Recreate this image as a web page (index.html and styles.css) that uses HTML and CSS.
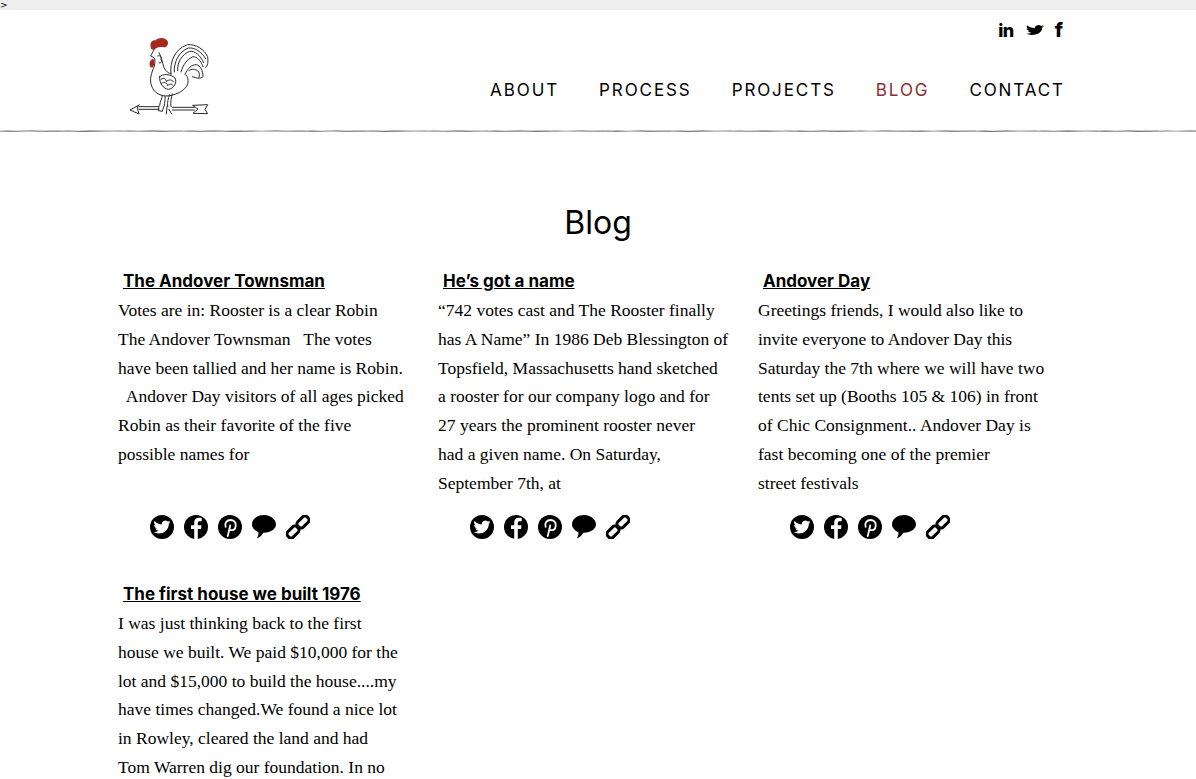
FILE: index.html
```html
<!DOCTYPE html>
<html lang="en">
<head>
  <meta charset="UTF-8">
  <meta name="viewport" content="width=device-width, initial-scale=1.0">
  <title>Blog</title>
  <link rel="stylesheet" href="styles.css">
</head>
<body>
<svg class="sprites" width="0" height="0" aria-hidden="true">
  <symbol id="bird" viewBox="0 0 24 24" preserveAspectRatio="none">
    <path d="M23.953 4.57a10 10 0 01-2.825.775 4.958 4.958 0 002.163-2.723c-.951.555-2.005.959-3.127 1.184a4.92 4.92 0 00-8.384 4.482C7.69 8.095 4.067 6.13 1.64 3.162a4.822 4.822 0 00-.666 2.475c0 1.71.87 3.213 2.188 4.096a4.904 4.904 0 01-2.228-.616v.06a4.923 4.923 0 003.946 4.827 4.996 4.996 0 01-2.212.085 4.936 4.936 0 004.604 3.417 9.867 9.867 0 01-6.102 2.105c-.39 0-.779-.023-1.17-.067a13.995 13.995 0 007.557 2.209c9.053 0 13.998-7.496 13.998-13.985 0-.21 0-.42-.015-.63A9.935 9.935 0 0024 4.59z"/>
  </symbol>
  <symbol id="share-twitter" viewBox="0 0 24 24">
    <circle cx="12" cy="12" r="12" fill="#000"/>
    <use href="#bird" x="3.500" y="4" width="17" height="16" fill="#fff"/>
  </symbol>
  <symbol id="share-facebook" viewBox="0 0 24 24">
    <circle cx="12" cy="12" r="12" fill="#000"/>
    <path d="M13.800 24v-10h3.200l.5-3.800h-3.700V8c0-1.100.4-1.800 1.900-1.800h2V2.900c-.4-.1-1.500-.2-2.800-.2-2.800 0-4.700 1.700-4.700 4.800v2.700H7V14h3.200v10z" fill="#fff"/>
  </symbol>
  <symbol id="share-pinterest" viewBox="0 0 24 24">
    <circle cx="12" cy="12" r="12" fill="#000"/>
    <path d="M9.800 21l2.400-10.500M7.600 11.800C6.300 8.200 8.800 5 12.500 5c3.300 0 5.200 2.200 5.200 4.900 0 3.200-1.700 5.300-4 5.300-1.100 0-2-.6-2.300-1.500" fill="none" stroke="#fff" stroke-width="1.800" stroke-linecap="round"/>
  </symbol>
  <symbol id="share-comment" viewBox="0 0 24 24">
    <path d="M12 0C5.400 0 0 4 0 9.300c0 3.400 2.500 6.300 6.200 7.800.6 1.800 0 4.100-1.400 6.400 2.900-1 5-2.900 6.400-5.700h.8c6.600 0 12-3.700 12-8.500S18.600 0 12 0z"/>
  </symbol>
  <symbol id="share-link" viewBox="0 0 24 24">
    <g fill="none" stroke="#000" stroke-width="3">
      <rect x="-6.500" y="-3.800" width="13" height="7.600" rx="3" transform="translate(7 17) rotate(-45)"/>
      <rect x="-6.500" y="-3.800" width="13" height="7.600" rx="3" transform="translate(17 7) rotate(-45)"/>
    </g>
  </symbol>
</svg>

<div class="topbar">&gt;</div>

<header class="site-header">
  <a class="logo" href="#">
    <svg width="84" height="80" viewBox="55 110 250 240" aria-label="Rooster weathervane">
      <g fill="none" stroke="#2a2a2a" stroke-width="3" stroke-linecap="round" stroke-linejoin="round">
        <!-- neck and body -->
        <path d="M135 152C130 158 129 164 125 170L135 175C139 180 138 190 136 200C128 220 120 240 128 260C135 280 150 288 170 290C190 290 220 280 232 262C240 250 238 235 232 228"/>
        <path d="M150 160C158 172 160 190 165 205C170 215 178 222 186 224"/>
        <!-- wing scales -->
        <path d="M152 232C162 222 185 224 198 236C205 250 195 268 178 270C162 268 150 250 152 232Z"/>
        <path d="M156 240C164 234 172 238 172 246M172 246C180 240 190 240 194 248M158 252C166 246 174 250 176 258M176 258C184 252 190 254 192 258"/>
        <!-- face -->
        <path d="M146 170C152 166 158 172 156 180C160 186 156 194 150 190"/>
        <!-- tail feathers -->
        <path d="M186 224C182 190 195 150 235 136C262 134 285 150 296 172C298 190 296 200 290 204"/>
        <path d="M196 218C194 190 208 158 238 146C258 144 278 158 290 178"/>
        <path d="M206 214C204 190 218 166 242 156C258 154 274 168 284 190"/>
        <path d="M216 218C222 196 234 180 252 172C264 172 276 184 282 202"/>
        <path d="M228 226C236 206 248 196 262 196C274 198 282 214 282 232C274 240 262 236 250 232"/>
        <path d="M240 214C248 208 258 208 268 216C272 222 272 228 270 234"/>
        <!-- legs -->
        <path d="M160 288C160 298 152 306 152 318M168 290C170 300 166 310 166 320M182 286C178 298 174 308 176 322M190 284C186 296 184 310 186 322"/>
        <path d="M150 320L148 334L160 336L164 322M174 322L172 344M180 330L188 344"/>
        <!-- arrow -->
        <path d="M90 322H148M90 330H150M190 324H256M190 332H256"/>
        <path d="M90 317L63 332L90 344L86 330V322Z"/>
        <path d="M252 318L296 316L288 330L296 343L252 342L266 330Z"/>
      </g>
      <path d="M127 150C120 132 128 120 140 123C148 113 172 113 177 128C178 140 170 146 160 143C150 142 140 145 135 152Z" fill="#a52a1e"/>
      <path d="M133 178C122 180 118 195 125 204C132 208 138 195 136 185Z" fill="#a52a1e"/>
    </svg>
  </a>
  <div class="header-right">
    <div class="social">
      <a class="social-in" href="#">in</a>
      <a class="social-bird" href="#"><svg width="18" height="12"><use href="#bird" width="18" height="12"/></svg></a>
      <a class="social-f" href="#">f</a>
    </div>
    <nav class="main-nav">
      <a href="#">ABOUT</a>
      <a href="#">PROCESS</a>
      <a href="#">PROJECTS</a>
      <a class="active" href="#">BLOG</a>
      <a href="#">CONTACT</a>
    </nav>
  </div>
</header>
<div class="rule"></div>

<main>
  <h1 class="page-title">Blog</h1>
  <div class="posts">
    <article class="post">
      <h2><a href="#">The Andover Townsman</a></h2>
      <p>Votes are in: Rooster is a clear Robin<br>The Andover Townsman &nbsp; The votes<br>have been tallied and her name is Robin.<br>&nbsp; Andover Day visitors of all ages picked<br>Robin as their favorite of the five<br>possible names for</p>
      <div class="share">
        <svg><use href="#share-twitter"/></svg>
        <svg><use href="#share-facebook"/></svg>
        <svg><use href="#share-pinterest"/></svg>
        <svg><use href="#share-comment"/></svg>
        <svg><use href="#share-link"/></svg>
      </div>
    </article>
    <article class="post">
      <h2><a href="#">He’s got a name</a></h2>
      <p>“742 votes cast and The Rooster finally<br>has A Name” In 1986 Deb Blessington of<br>Topsfield, Massachusetts hand sketched<br>a rooster for our company logo and for<br>27 years the prominent rooster never<br>had a given name. On Saturday,<br>September 7th, at</p>
      <div class="share">
        <svg><use href="#share-twitter"/></svg>
        <svg><use href="#share-facebook"/></svg>
        <svg><use href="#share-pinterest"/></svg>
        <svg><use href="#share-comment"/></svg>
        <svg><use href="#share-link"/></svg>
      </div>
    </article>
    <article class="post">
      <h2><a href="#">Andover Day</a></h2>
      <p>Greetings friends, I would also like to<br>invite everyone to Andover Day this<br>Saturday the 7th where we will have two<br>tents set up (Booths 105 &amp; 106) in front<br>of Chic Consignment.. Andover Day is<br>fast becoming one of the premier<br>street festivals</p>
      <div class="share">
        <svg><use href="#share-twitter"/></svg>
        <svg><use href="#share-facebook"/></svg>
        <svg><use href="#share-pinterest"/></svg>
        <svg><use href="#share-comment"/></svg>
        <svg><use href="#share-link"/></svg>
      </div>
    </article>
    <article class="post">
      <h2><a href="#">The first house we built 1976</a></h2>
      <p>I was just thinking back to the first<br>house we built. We paid $10,000 for the<br>lot and $15,000 to build the house....my<br>have times changed.We found a nice lot<br>in Rowley, cleared the land and had<br>Tom Warren dig our foundation. In no</p>
    </article>
  </div>
</main>
</body>
</html>
```

FILE: styles.css
```css
body {
  margin: 0;
  background: #fff;
  color: #000;
  font-family: "Liberation Serif", serif;
}

a {
  color: inherit;
  text-decoration: none;
}

.sprites {
  position: absolute;
}

.topbar {
  height: 10px;
  background: #eee;
  font-family: "DejaVu Sans", sans-serif;
  font-size: 9px;
  line-height: 10px;
  overflow: hidden;
}

.site-header {
  display: flex;
  justify-content: space-between;
  height: 120px;
  padding: 0 131px 0 127px;
}

.logo {
  padding-top: 26px;
}

.logo svg {
  display: block;
}

.header-right {
  display: flex;
  flex-direction: column;
  align-items: flex-end;
}

.social {
  display: flex;
  align-items: center;
  height: 18px;
  margin-top: 11px;
  margin-right: 2px;
  font-family: Inter, sans-serif;
  font-weight: 800;
  font-size: 18px;
}

.social-in {
  margin-right: 12px;
  letter-spacing: -0.5px;
}

.social-bird {
  margin-right: 11px;
}

.social-bird svg {
  display: block;
}

.social-f {
  font-size: 20px;
}

.main-nav {
  display: flex;
  gap: 40px;
  margin-top: 40px;
  font-family: Inter, sans-serif;
  font-size: 17px;
  line-height: 22px;
  letter-spacing: 1.9px;
}

.main-nav .active {
  color: #8e2b33;
}

.rule {
  height: 2px;
  background:
    repeating-linear-gradient(90deg, #ddd 0, #b4b4b4 7px, #e2e2e2 17px, #a8a8a8 31px, #d0d0d0 43px, #bbb 61px) top / 100% 1px no-repeat,
    repeating-linear-gradient(90deg, #aaa 0, #888 13px, #c4c4c4 29px, #8c8c8c 47px, #b0b0b0 71px, #777 83px, #c8c8c8 113px, #999 151px) bottom / 100% 1px no-repeat;
}

.page-title {
  margin: 71px 0 0;
  text-align: center;
  font-family: Inter, sans-serif;
  font-weight: 400;
  font-size: 32px;
  line-height: 40px;
}

.posts {
  display: grid;
  grid-template-columns: repeat(3, 320px);
  padding-left: 118px;
  margin-top: 28px;
}

.post {
  height: 313px;
}

.post h2 {
  margin: 0;
  padding-left: 5px;
  font-family: Inter, sans-serif;
  font-size: 17px;
  font-weight: 700;
  line-height: 20px;
}

.post h2 a {
  text-decoration: underline;
}

.post p {
  margin: 5px 0 0;
  min-height: 203px;
  font-size: 17.500px;
  line-height: 28.800px;
  white-space: nowrap;
}

.share {
  display: flex;
  gap: 10px;
  margin-top: 16px;
  padding-left: 32px;
}

.share svg {
  width: 24px;
  height: 24px;
}
```
